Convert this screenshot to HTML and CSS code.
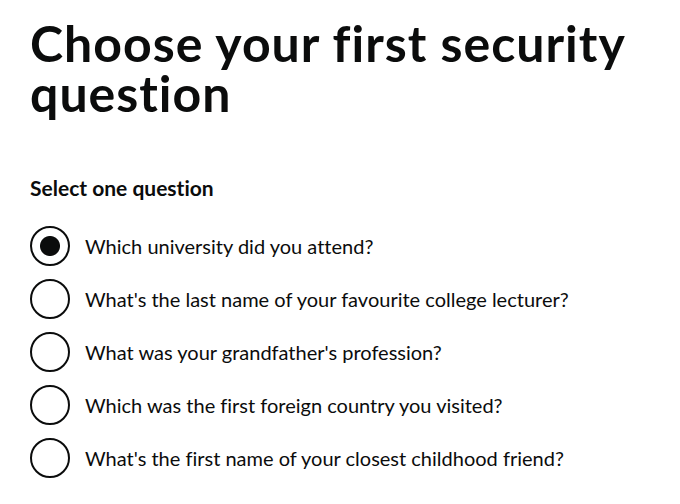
FILE: index.html
```html
<!DOCTYPE html>
<html lang="en">
<head>
  <meta charset="UTF-8" />
  <title>Choose your first security question</title>
  <meta name="viewport" content="width=device-width, initial-scale=1.0" />
  <link rel="stylesheet" href="styles.css">
</head>
<body>
  <main class="page">
    <h1 class="heading">Choose your first security question</h1>

    <fieldset class="fieldset">
      <legend class="legend">Select one question</legend>
      <div class="radios">
        <div class="radio-item">
          <input class="radio-input" type="radio" id="q1" name="question" checked />
          <label class="radio-label" for="q1">Which university did you attend?</label>
        </div>
        <div class="radio-item">
          <input class="radio-input" type="radio" id="q2" name="question" />
          <label class="radio-label" for="q2">What's the last name of your favourite college lecturer?</label>
        </div>
        <div class="radio-item">
          <input class="radio-input" type="radio" id="q3" name="question" />
          <label class="radio-label" for="q3">What was your grandfather's profession?</label>
        </div>
        <div class="radio-item">
          <input class="radio-input" type="radio" id="q4" name="question" />
          <label class="radio-label" for="q4">Which was the first foreign country you visited?</label>
        </div>
        <div class="radio-item">
          <input class="radio-input" type="radio" id="q5" name="question" />
          <label class="radio-label" for="q5">What's the first name of your closest childhood friend?</label>
        </div>
      </div>
    </fieldset>
  </main>
</body>
</html>
```

FILE: styles.css
```css
body {
  font-family: Lato, "Liberation Sans", Arial, sans-serif;
  font-variant-ligatures: none;
  color: #0b0c0c;
  background: #ffffff;
  margin: 0;
  padding: 0;
}
.page {
  padding: 18px 30px;
}
.heading {
  font-size: 50px;
  line-height: 50px;
  font-weight: 700;
  letter-spacing: 1px;
  margin: 0 0 57px;
}
.fieldset {
  border: 0;
  margin: 0;
  padding: 0;
  min-width: 0;
}
.legend {
  padding: 0;
  font-size: 21px;
  line-height: 25px;
  font-weight: 700;
  margin-bottom: 26px;
}
.radios {
  display: flex;
  flex-direction: column;
  gap: 13px;
}
.radio-item {
  display: flex;
  align-items: center;
  min-height: 40px;
}
.radio-input {
  appearance: none;
  -webkit-appearance: none;
  flex: none;
  width: 40px;
  height: 40px;
  margin: 0;
  border: 2px solid #0b0c0c;
  border-radius: 50%;
  background: #ffffff;
  cursor: pointer;
}
.radio-input:checked {
  background: radial-gradient(circle, #0b0c0c 9.5px, #ffffff 10.5px);
}
.radio-label {
  font-size: 20px;
  line-height: 25px;
  padding: 5px 15px;
  cursor: pointer;
}
```
